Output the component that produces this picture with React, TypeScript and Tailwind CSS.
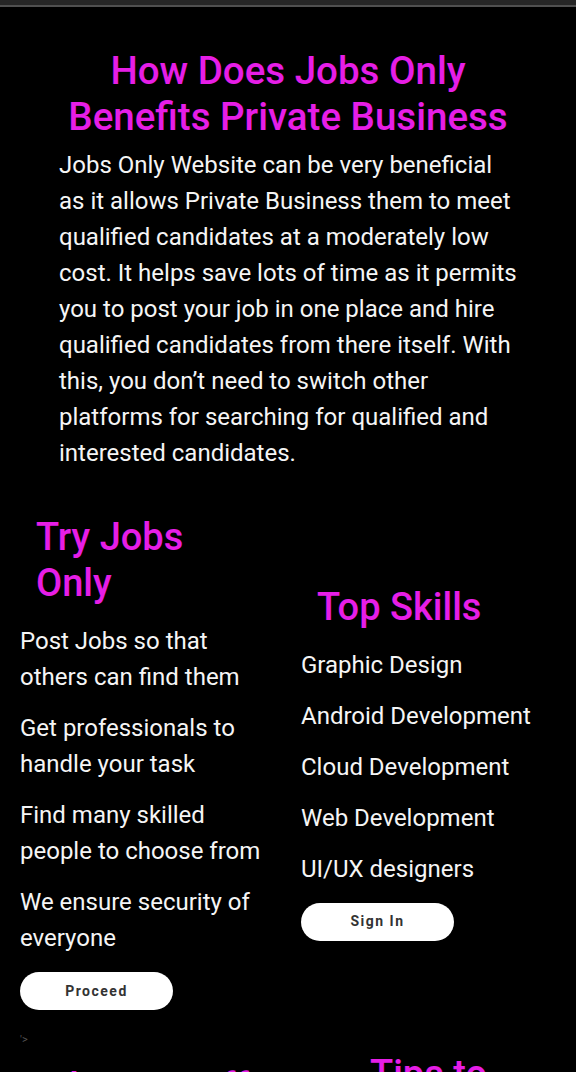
const perks = [
  'Post Jobs so that others can find them',
  'Get professionals to handle your task',
  'Find many skilled people to choose from',
  'We ensure security of everyone',
];

const skills = ['Graphic Design', 'Android Development', 'Cloud Development', 'Web Development', 'UI/UX designers'];

const font = { fontFamily: 'Roboto, "Noto Sans", sans-serif' };

const Pill = ({ label }: { label: string }) => (
  <button className="mt-[16px] h-[38px] w-[153px] rounded-full bg-white text-[14px] font-bold tracking-[1.5px] text-[#333]">
    {label}
  </button>
);

export default function App() {
  return (
    <div className="h-[1072px] overflow-hidden bg-black text-[#f5f5f5]" style={font}>
      <div className="h-[5px] bg-[#262626]" />
      <div className="h-[2px] bg-[#505050]" />

      <h2 className="mt-[41px] text-center text-[38.5px] font-medium leading-[46px] text-[#e61ee6]">
        How Does Jobs Only
        <br />
        Benefits Private Business
      </h2>
      <p className="ml-[59px] mt-[7px] w-[459px] text-[24px] leading-[36px]">
        Jobs Only Website can be very beneficial as it allows Private Business them to meet qualified candidates at a
        moderately low cost. It helps save lots of time as it permits you to post your job in one place and hire
        qualified candidates from there itself. With this, you don’t need to switch other platforms for searching for
        qualified and interested candidates.
      </p>

      <div className="mt-[43px] flex items-center">
        <div className="w-[301px] pl-5">
          <h2 className="ml-4 w-[200px] text-[38px] font-medium leading-[46px] text-[#e61ee6]">Try Jobs Only</h2>
          <div className="mt-[17px] flex w-[242px] flex-col gap-[15px] text-[24px] leading-[36px]">
            {perks.map((p) => (
              <p key={p}>{p}</p>
            ))}
          </div>
          <Pill label="Proceed" />
        </div>
        <div className="flex-1">
          <h2 className="ml-4 text-[38px] font-medium leading-[46px] text-[#e61ee6]">Top Skills</h2>
          <div className="mt-[17px] flex flex-col gap-[15px] text-[24px] leading-[36px]">
            {skills.map((s) => (
              <p key={s}>{s}</p>
            ))}
          </div>
          <Pill label="Sign In" />
        </div>
      </div>

      <div className="ml-[20px] mt-[24px] text-[11px] leading-[12px] text-[#555]">'&gt;</div>

      <div className="flex items-start">
        <h2 className="ml-[36px] mt-[18px] w-[300px] text-[38px] font-medium leading-[46px] text-[#e61ee6]">
          What We Offer
        </h2>
        <h2 className="ml-[34px] mt-[5px] text-[38px] font-medium leading-[46px] text-[#e61ee6]">Tips to</h2>
      </div>
    </div>
  );
}
